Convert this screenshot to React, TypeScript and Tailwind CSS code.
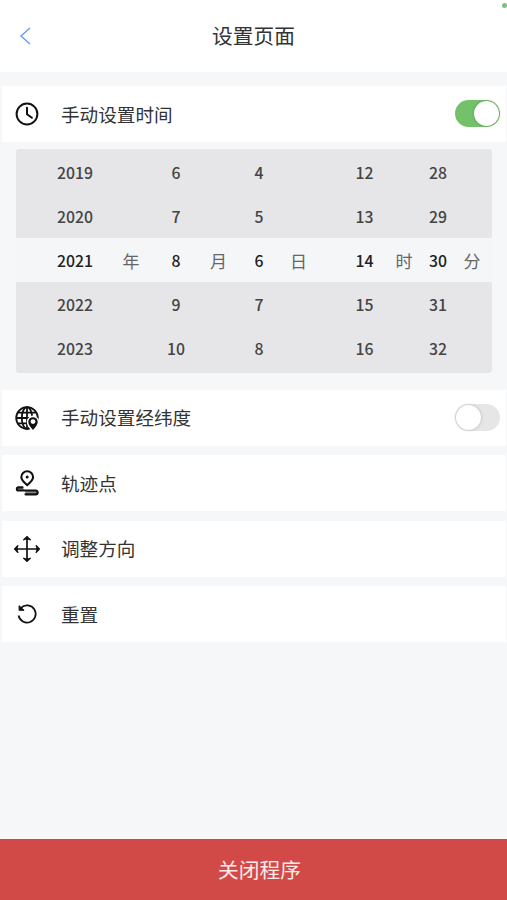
import { useState } from 'react'
import type { ReactNode } from 'react'

const PICKER_ROWS = [
  ['2019', '6', '4', '12', '28'],
  ['2020', '7', '5', '13', '29'],
  ['2021', '8', '6', '14', '30'],
  ['2022', '9', '7', '15', '31'],
  ['2023', '10', '8', '16', '32'],
]
const UNITS = ['年', '月', '日', '时', '分']
const SELECTED_ROW = 2

function ClockIcon() {
  return (
    <svg width="24" height="24" viewBox="0 0 24 24" fill="none" stroke="#111" strokeWidth="2">
      <circle cx="12" cy="12" r="10.4" />
      <path d="M12 5.8v6.4l4.9 3.6" strokeLinecap="round" strokeLinejoin="round" />
    </svg>
  )
}

function GlobePinIcon() {
  return (
    <svg width="26" height="26" viewBox="0 0 26 26" fill="none" stroke="#111" strokeWidth="1.8">
      <circle cx="13" cy="13" r="10.8" />
      <ellipse cx="13" cy="13" rx="5.2" ry="10.8" />
      <path d="M13 2.2v21.6M3.8 7.6h18.4M2.2 13h21.6M3.8 18.4h18.4" />
      <path
        d="M19 27c-3-3.7-5.8-6.9-5.8-10.2a5.8 5.8 0 0 1 11.6 0c0 3.3-2.8 6.5-5.8 10.2z"
        fill="#fff"
        stroke="#fff"
        strokeWidth="1"
      />
      <path d="M19 25c-2.8-3.3-4.7-5.6-4.7-8.1a4.7 4.7 0 0 1 9.4 0c0 2.5-1.9 4.800-4.700 8.100z" fill="#111" stroke="none" />
      <circle cx="19" cy="16.600" r="2.400" fill="#fff" stroke="none" />
    </svg>
  )
}

function TrackIcon() {
  return (
    <svg width="24" height="26" viewBox="0 0 24 26" fill="none" stroke="#111" strokeWidth="2.100">
      <path d="M12.200 15.200C8.600 12 6.300 10 6.300 7.200a5.900 5.900 0 0 1 11.800 0c0 2.800-2.300 4.800-5.900 8z" strokeLinejoin="round" />
      <circle cx="12.200" cy="7.100" r="1.500" fill="#111" stroke="none" />
      <path
        d="M7.500 17.300H3.600a1.700 1.700 0 0 0-1.700 1.700c0 1 .8 1.500 1.700 1.500H10M10 20.500h10.700a1.900 1.900 0 0 1 0 3.800H10.500"
        fill="#888"
        strokeWidth="2.200"
        strokeLinecap="round"
      />
    </svg>
  )
}

function MoveIcon() {
  return (
    <svg width="28" height="28" viewBox="0 0 28 28" fill="none" stroke="#111" strokeWidth="1.700">
      <path d="M14 1.800v24.400M1.800 14h24.400" />
      <path
        d="M10.800 4.800 14 1.700l3.200 3.100M10.800 23.200l3.200 3.100 3.200-3.100M4.800 10.800 1.700 14l3.100 3.200M23.200 10.800l3.100 3.200-3.100 3.200"
        fill="#111"
        strokeWidth="1.500"
        strokeLinejoin="round"
        strokeLinecap="round"
      />
    </svg>
  )
}

function ResetIcon() {
  return (
    <svg width="24" height="24" viewBox="0 0 24 24" fill="none" stroke="#111" strokeWidth="1.700">
      <path d="M6 5.900A8.600 8.600 0 1 1 3.600 13.500" />
      <path d="M4.100 3.700v4.600h5z" fill="#111" strokeWidth="1" strokeLinejoin="round" />
    </svg>
  )
}

function Toggle({ on, onClick }: { on: boolean; onClick: () => void }) {
  return (
    <button
      onClick={onClick}
      className={`mb-px flex h-[27px] w-[45px] items-center rounded-full p-px ${
        on ? 'justify-end bg-[#73c26a]' : 'justify-start bg-[#e6e6e6]'
      }`}
    >
      <span className="size-[25px] rounded-full bg-white shadow-[0_0_3px_rgba(0,0,0,0.25)]" />
    </button>
  )
}

function SettingRow({ icon, label, children }: { icon: ReactNode; label: string; children?: ReactNode }) {
  return (
    <div className="mr-px ml-0.5 flex h-14 items-center bg-white pr-[6px] pl-[11px]">
      <div className="flex w-7 justify-center">{icon}</div>
      <span className="mb-px ml-[20px] flex-1 text-[18.6px] leading-7 text-[#333]">{label}</span>
      {children}
    </div>
  )
}

// Each value column is followed by the column of its unit
function TimePicker() {
  return (
    <div className="mt-[7px] mr-[15px] ml-4 rounded-[3px] bg-[#e6e6e8] pt-[0.5px] pb-[3.5px]">
      {PICKER_ROWS.map((row, i) => (
        <div
          key={row[0]}
          className={`grid h-11 grid-cols-[70px_42px_48px_37px_44px_35px_27px_43px_36px_32px_36px] items-center pt-[3px] pl-6 text-center text-[15.8px] leading-6 font-medium ${
            i === SELECTED_ROW ? 'bg-[#f5f6f8] text-[#222]' : 'text-[#444]'
          }`}
        >
          {row.map((value, col) => (
            <PickerCell key={col} value={value} unit={i === SELECTED_ROW ? UNITS[col] : ''} gap={col === 2} />
          ))}
        </div>
      ))}
    </div>
  )
}

function PickerCell({ value, unit, gap }: { value: string; unit: string; gap: boolean }) {
  return (
    <>
      <span>{value}</span>
      <span className="text-[17px] font-normal text-[#666]">{unit}</span>
      {gap && <span />}
    </>
  )
}

export default function App() {
  const [manualTime, setManualTime] = useState(true)
  const [manualCoords, setManualCoords] = useState(false)

  return (
    <div className="relative flex h-[900px] w-[507px] flex-col overflow-hidden bg-[#f5f7f9] font-['Noto_Sans_CJK_SC',sans-serif]">
      <span className="absolute top-[3px] right-0 size-[5px] rounded-full bg-[#75c57b]" />

      {/* Header */}
      <header className="grid h-[72px] grid-cols-[50px_1fr_50px] items-center bg-white">
        <button className="pl-[19px]">
          <svg width="13" height="18" viewBox="0 0 13 18" fill="none" stroke="#6b9df0" strokeWidth="1.5">
            <path d="M11 1 2 9l9 8" />
          </svg>
        </button>
        <h1 className="mb-[2px] text-center text-[20.7px] leading-8 text-[#333]">设置页面</h1>
      </header>

      {/* Settings */}
      <main className="flex-1 pt-[14px]">
        <SettingRow icon={<ClockIcon />} label="手动设置时间">
          <Toggle on={manualTime} onClick={() => setManualTime(!manualTime)} />
        </SettingRow>
        <TimePicker />
        <div className="mt-[16.5px] flex flex-col gap-[9.5px]">
          <SettingRow icon={<GlobePinIcon />} label="手动设置经纬度">
            <Toggle on={manualCoords} onClick={() => setManualCoords(!manualCoords)} />
          </SettingRow>
          <SettingRow icon={<TrackIcon />} label="轨迹点" />
          <SettingRow icon={<MoveIcon />} label="调整方向" />
          <SettingRow icon={<ResetIcon />} label="重置" />
        </div>
      </main>

      <button className="h-[61px] bg-[#d24a47] pb-[2px] pl-3 text-[20.7px] leading-8 text-[#fbeaea]">关闭程序</button>
    </div>
  )
}
